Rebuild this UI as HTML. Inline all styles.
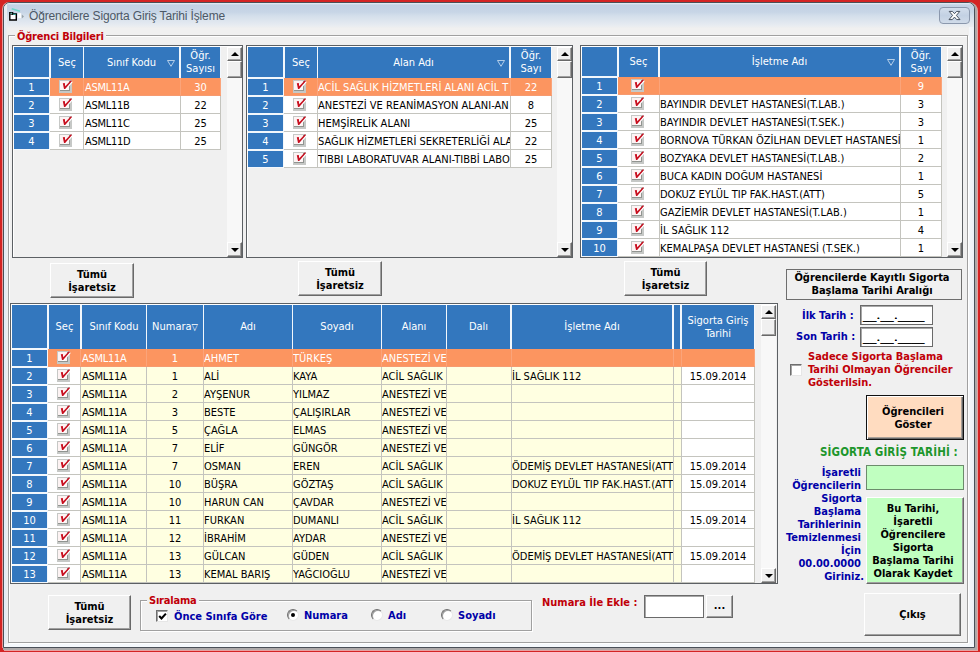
<!DOCTYPE html>
<html lang="tr"><head><meta charset="utf-8"><title>Öğrencilere Sigorta Giriş Tarihi İşleme</title>
<style>
html,body{margin:0;padding:0}
body{width:980px;height:652px;overflow:hidden;background:#d42424;position:relative;
 font-family:"DejaVu Sans Condensed","Liberation Sans",sans-serif;font-size:11px;line-height:13px;color:#000}
div,span,i,b,svg{position:absolute;box-sizing:border-box}
#win{left:3px;top:2px;width:972px;height:646px;border:1px solid #4a5058;border-radius:7px 7px 0 0;
 background:#f0f0f0;overflow:hidden;box-shadow:1px 1px 0 1px #aeaaaa,2px 2px 0 1px #e6a2a2,-1px 0 0 0 #e89a9a}
#tb{left:0;top:0;width:970px;height:25px;background:linear-gradient(#e9eff6 0,#c3d2e5 2px,#c7d5e6 9px,#d4dfeb 13px,#e0e7ef 19px,#e9edf1 23px,#efefef 25px)}
#ttl{left:25px;top:4px;font:12px/16px "Liberation Sans",sans-serif;color:#4c5866;letter-spacing:-0.15px;white-space:nowrap}
#cls{left:935px;top:4px;width:32px;height:18px;border:1px solid #8b98ad;border-radius:4px;background:linear-gradient(#d3deec,#c3d1e3 50%,#d0dbe9)}
#lf{left:0;top:0;width:3px;height:646px;background:linear-gradient(90deg,#e6f0fa,#e4eaf2 60%,#f0f0f0)}
.gb{border:1px solid #a0a0a0;box-shadow:1px 1px 0 #fff, inset 1px 1px 0 #fff}
.lg{background:#f0f0f0;letter-spacing:-0.2px;font-weight:bold;color:#c00008;white-space:nowrap;padding:0 2px}
.grid{border:1px solid #5c6064;background:#f0f0f0;box-shadow:inset 1px 1px 0 #fff;box-sizing:content-box}
.sepbg{background:#f2f7fc}
.hd{background:#3377be;color:#fff;text-align:center;overflow:hidden;display:flex;align-items:center;justify-content:center}
.hd span{position:static;display:block;white-space:pre-line;line-height:13px}
.srt{top:50%;margin-top:-3px}
.fx{background:#3377be;color:#fff;text-align:center;line-height:15px;padding-top:1px}
.dc{white-space:nowrap;overflow:hidden;line-height:13px;padding-top:3px;box-shadow:1px 0 0 #c4c4be,0 1px 0 #c4c4be,1px 1px 0 #c4c4be}
.dc.sl{color:#fff;box-shadow:1px 0 0 #fba47a,0 1px 0 #f69a70,1px 1px 0 #f69a70}
.l{text-align:left}
.k{text-align:left;padding-left:1px;letter-spacing:-0.3px}
.c{text-align:center}
.ck{left:9px;top:2px;width:13px;height:13px;background:#fdf3f3;border:solid #c6c8c6;border-width:1px 2px 2px 1px;box-shadow:inset -1px -1px 0 #909490}
.ck svg{left:-1px;top:-1px;overflow:visible}
.trk{background:#f8f8f8}
.sbtn{background:#f0f0f0;border:1px solid;border-color:#fff #696969 #696969 #fff;box-shadow:inset -1px -1px 0 #a0a0a0}
.aup{left:3px;top:4px;width:0;height:0;border:4px solid transparent;border-top:0;border-bottom:4px solid #000}
.adn{left:3px;top:5px;width:0;height:0;border:4px solid transparent;border-bottom:0;border-top:4px solid #000}
.btn{background:#f0f0f0;border:1px solid;border-color:#fff #696969 #696969 #fff;box-shadow:inset -1px -1px 0 #a0a0a0;font-weight:bold;text-align:center;display:flex;align-items:center;justify-content:center;color:#000}
.btn span{position:static;display:block;white-space:pre-line;line-height:13px}
.tx{white-space:nowrap;font-weight:bold}
.nv{color:#0000a8}
.rd{color:#c00008}
.inp{background:#fff;border:1px solid #6a6a6a;box-shadow:inset 1px 1px 0 #a8a8a8}
.cb{background:#fff;border:1px solid;border-color:#6e6e6e #e6e6e6 #e6e6e6 #6e6e6e;box-shadow:inset 1px 1px 0 #a4a4a4}
</style></head><body>
<div id="win">
<div id="tb"></div><div id="lf"></div>

<div style="left:-4px;top:-3px;width:980px;height:652px">
<svg style="left:9px;top:8px" width="16" height="14" viewBox="0 0 16 14"><path d="M0.8 4.6H3.6V6H7.3V12H0.8Z" fill="#fff" stroke="#000" stroke-width="1.4"/><path d="M1.4 6.3H6.8" stroke="#000" stroke-width="0.9"/><path d="M1.6 5.2H3.2M4.2 6.4H6.8" stroke="#38c8b4" stroke-width="0.9"/><path d="M2.7 0.8L11 3.2" stroke="#6fd6c8" stroke-width="1.5"/><rect x="8.8" y="5.2" width="3.4" height="4.9" fill="#fdfdfd"/><path d="M12.8 6.6L15 8.5L12.8 10.4Z" fill="#98a2a8"/></svg><div id="ttl" style="left:29px;top:8px">Öğrencilere Sigorta Giriş Tarihi İşleme</div><div id="cls" style="left:939px;top:7px;width:31px;height:17px"><svg style="left:8px;top:2px" width="13" height="11" viewBox="0 0 13 11"><path d="M1.2 1.4h3.2L6.5 3.7 8.6 1.4h3.2L8.4 5.4 12 9.6H8.7L6.5 7.1 4.3 9.6H1L4.6 5.4z" fill="#fff" stroke="#46505e" stroke-width="1" stroke-linejoin="round"/></svg></div><div class="" style="left:969px;top:27px;width:5px;height:620px;background:linear-gradient(90deg,#f6f8fb,#edf2f8)"></div><div class="" style="left:4px;top:644px;width:970px;height:3px;background:#f5f8fc"></div><div class="gb" style="left:8px;top:35px;width:960px;height:608px;"></div><div class="lg" style="left:15px;top:30px">Öğrenci Bilgileri</div><div class="grid" style="left:12px;top:45px;width:229px;height:211px"></div><div class="sepbg" style="left:14px;top:47px;width:207px;height:32px;"></div><div class="hd" style="left:14px;top:47px;width:35px;height:30px;"><span></span></div><div class="hd" style="left:51px;top:47px;width:32px;height:31px;padding-bottom:1px;"><span>Seç</span></div><div class="hd" style="left:84px;top:47px;width:95px;height:31px;padding-bottom:1px;"><span>Sınıf Kodu</span><svg class="srt" style="right:4px" width="8" height="7" viewBox="0 0 8 7"><path d="M0.5 0.5 H7.5 L4 6.3 Z" fill="none" stroke="#d4e3f3" stroke-width="0.8"/></svg></div><div class="hd" style="left:181px;top:47px;width:39px;height:31px;padding-bottom:1px;"><span>Öğr.
Sayısı</span></div><div class="sepbg" style="left:14px;top:78px;width:37px;height:72px;"></div><div class="fx" style="left:14px;top:79px;width:35px;height:16px;">1</div><div class="fx" style="left:14px;top:97px;width:35px;height:16px;">2</div><div class="fx" style="left:14px;top:115px;width:35px;height:16px;">3</div><div class="fx" style="left:14px;top:133px;width:35px;height:16px;">4</div><div class="dc sl cc" style="left:50px;top:78px;width:33px;height:17px;background:#fc9560;"><i class="ck" style="left:9px"><svg width="13" height="13" viewBox="0 0 13 13"><path d="M4.6 4.3 L6.6 3.9 L7.1 7.2 L12.7 1.2 L13.8 2.1 L7 10.1 L5.8 10.1 Z" fill="#fff"/><path d="M3.8 3.3 L5.8 2.9 L6.3 6.2 L11.9 0.2 L13 1.1 L6.2 9.1 L5 9.1 Z" fill="#c80f1f"/></svg></i></div><div class="dc sl k" style="left:84px;top:78px;width:96px;height:17px;background:#fc9560;">ASML11A</div><div class="dc sl c" style="left:181px;top:78px;width:39px;height:17px;background:#fc9560;">30</div><div class="dc cc" style="left:50px;top:96px;width:33px;height:17px;background:#ffffff;"><i class="ck" style="left:9px"><svg width="13" height="13" viewBox="0 0 13 13"><path d="M4.6 4.3 L6.6 3.9 L7.1 7.2 L12.7 1.2 L13.8 2.1 L7 10.1 L5.8 10.1 Z" fill="#fff"/><path d="M3.8 3.3 L5.8 2.9 L6.3 6.2 L11.9 0.2 L13 1.1 L6.2 9.1 L5 9.1 Z" fill="#c80f1f"/></svg></i></div><div class="dc k" style="left:84px;top:96px;width:96px;height:17px;background:#ffffff;">ASML11B</div><div class="dc c" style="left:181px;top:96px;width:39px;height:17px;background:#ffffff;">22</div><div class="dc cc" style="left:50px;top:114px;width:33px;height:17px;background:#ffffff;"><i class="ck" style="left:9px"><svg width="13" height="13" viewBox="0 0 13 13"><path d="M4.6 4.3 L6.6 3.9 L7.1 7.2 L12.7 1.2 L13.8 2.1 L7 10.1 L5.8 10.1 Z" fill="#fff"/><path d="M3.8 3.3 L5.8 2.9 L6.3 6.2 L11.9 0.2 L13 1.1 L6.2 9.1 L5 9.1 Z" fill="#c80f1f"/></svg></i></div><div class="dc k" style="left:84px;top:114px;width:96px;height:17px;background:#ffffff;">ASML11C</div><div class="dc c" style="left:181px;top:114px;width:39px;height:17px;background:#ffffff;">25</div><div class="dc cc" style="left:50px;top:132px;width:33px;height:17px;background:#ffffff;"><i class="ck" style="left:9px"><svg width="13" height="13" viewBox="0 0 13 13"><path d="M4.6 4.3 L6.6 3.9 L7.1 7.2 L12.7 1.2 L13.8 2.1 L7 10.1 L5.8 10.1 Z" fill="#fff"/><path d="M3.8 3.3 L5.8 2.9 L6.3 6.2 L11.9 0.2 L13 1.1 L6.2 9.1 L5 9.1 Z" fill="#c80f1f"/></svg></i></div><div class="dc k" style="left:84px;top:132px;width:96px;height:17px;background:#ffffff;">ASML11D</div><div class="dc c" style="left:181px;top:132px;width:39px;height:17px;background:#ffffff;">25</div><div class="trk" style="left:227px;top:47px;width:15px;height:210px;"></div><div class="sbtn" style="left:227px;top:47px;width:15px;height:14px;"><b class="aup"></b></div><div class="sbtn" style="left:227px;top:61px;width:15px;height:17px;"></div><div class="sbtn" style="left:227px;top:242px;width:15px;height:15px;"><b class="adn"></b></div><div class="grid" style="left:246px;top:45px;width:325px;height:211px"></div><div class="sepbg" style="left:248px;top:47px;width:304px;height:32px;"></div><div class="hd" style="left:248px;top:47px;width:35px;height:30px;"><span></span></div><div class="hd" style="left:285px;top:47px;width:32px;height:31px;padding-bottom:1px;"><span>Seç</span></div><div class="hd" style="left:318px;top:47px;width:191px;height:31px;padding-bottom:1px;"><span>Alan Adı</span><svg class="srt" style="right:4px" width="8" height="7" viewBox="0 0 8 7"><path d="M0.5 0.5 H7.5 L4 6.3 Z" fill="none" stroke="#d4e3f3" stroke-width="0.8"/></svg></div><div class="hd" style="left:511px;top:47px;width:40px;height:31px;padding-bottom:1px;"><span>Öğr.
Sayı</span></div><div class="sepbg" style="left:248px;top:78px;width:37px;height:90px;"></div><div class="fx" style="left:248px;top:79px;width:35px;height:16px;">1</div><div class="fx" style="left:248px;top:97px;width:35px;height:16px;">2</div><div class="fx" style="left:248px;top:115px;width:35px;height:16px;">3</div><div class="fx" style="left:248px;top:133px;width:35px;height:16px;">4</div><div class="fx" style="left:248px;top:151px;width:35px;height:16px;">5</div><div class="dc sl cc" style="left:284px;top:78px;width:33px;height:17px;background:#fc9560;"><i class="ck" style="left:9px"><svg width="13" height="13" viewBox="0 0 13 13"><path d="M4.6 4.3 L6.6 3.9 L7.1 7.2 L12.7 1.2 L13.8 2.1 L7 10.1 L5.8 10.1 Z" fill="#fff"/><path d="M3.8 3.3 L5.8 2.9 L6.3 6.2 L11.9 0.2 L13 1.1 L6.2 9.1 L5 9.1 Z" fill="#c80f1f"/></svg></i></div><div class="dc sl l" style="left:318px;top:78px;width:192px;height:17px;background:#fc9560;">ACİL SAĞLIK HİZMETLERİ ALANI ACİL T</div><div class="dc sl c" style="left:511px;top:78px;width:40px;height:17px;background:#fc9560;">22</div><div class="dc cc" style="left:284px;top:96px;width:33px;height:17px;background:#ffffff;"><i class="ck" style="left:9px"><svg width="13" height="13" viewBox="0 0 13 13"><path d="M4.6 4.3 L6.6 3.9 L7.1 7.2 L12.7 1.2 L13.8 2.1 L7 10.1 L5.8 10.1 Z" fill="#fff"/><path d="M3.8 3.3 L5.8 2.9 L6.3 6.2 L11.9 0.2 L13 1.1 L6.2 9.1 L5 9.1 Z" fill="#c80f1f"/></svg></i></div><div class="dc l" style="left:318px;top:96px;width:192px;height:17px;background:#ffffff;">ANESTEZİ VE REANİMASYON ALANI-AN</div><div class="dc c" style="left:511px;top:96px;width:40px;height:17px;background:#ffffff;">8</div><div class="dc cc" style="left:284px;top:114px;width:33px;height:17px;background:#ffffff;"><i class="ck" style="left:9px"><svg width="13" height="13" viewBox="0 0 13 13"><path d="M4.6 4.3 L6.6 3.9 L7.1 7.2 L12.7 1.2 L13.8 2.1 L7 10.1 L5.8 10.1 Z" fill="#fff"/><path d="M3.8 3.3 L5.8 2.9 L6.3 6.2 L11.9 0.2 L13 1.1 L6.2 9.1 L5 9.1 Z" fill="#c80f1f"/></svg></i></div><div class="dc l" style="left:318px;top:114px;width:192px;height:17px;background:#ffffff;">HEMŞİRELİK ALANI</div><div class="dc c" style="left:511px;top:114px;width:40px;height:17px;background:#ffffff;">25</div><div class="dc cc" style="left:284px;top:132px;width:33px;height:17px;background:#ffffff;"><i class="ck" style="left:9px"><svg width="13" height="13" viewBox="0 0 13 13"><path d="M4.6 4.3 L6.6 3.9 L7.1 7.2 L12.7 1.2 L13.8 2.1 L7 10.1 L5.8 10.1 Z" fill="#fff"/><path d="M3.8 3.3 L5.8 2.9 L6.3 6.2 L11.9 0.2 L13 1.1 L6.2 9.1 L5 9.1 Z" fill="#c80f1f"/></svg></i></div><div class="dc l" style="left:318px;top:132px;width:192px;height:17px;background:#ffffff;">SAĞLIK HİZMETLERİ SEKRETERLİĞİ ALA</div><div class="dc c" style="left:511px;top:132px;width:40px;height:17px;background:#ffffff;">22</div><div class="dc cc" style="left:284px;top:150px;width:33px;height:17px;background:#ffffff;"><i class="ck" style="left:9px"><svg width="13" height="13" viewBox="0 0 13 13"><path d="M4.6 4.3 L6.6 3.9 L7.1 7.2 L12.7 1.2 L13.8 2.1 L7 10.1 L5.8 10.1 Z" fill="#fff"/><path d="M3.8 3.3 L5.8 2.9 L6.3 6.2 L11.9 0.2 L13 1.1 L6.2 9.1 L5 9.1 Z" fill="#c80f1f"/></svg></i></div><div class="dc l" style="left:318px;top:150px;width:192px;height:17px;background:#ffffff;">TIBBI LABORATUVAR ALANI-TIBBİ LABO</div><div class="dc c" style="left:511px;top:150px;width:40px;height:17px;background:#ffffff;">25</div><div class="trk" style="left:557px;top:47px;width:15px;height:210px;"></div><div class="sbtn" style="left:557px;top:47px;width:15px;height:14px;"><b class="aup"></b></div><div class="sbtn" style="left:557px;top:61px;width:15px;height:17px;"></div><div class="sbtn" style="left:557px;top:242px;width:15px;height:15px;"><b class="adn"></b></div><div class="grid" style="left:580px;top:45px;width:381px;height:211px"></div><div class="sepbg" style="left:582px;top:47px;width:360px;height:31px;"></div><div class="hd" style="left:582px;top:47px;width:35px;height:29px;"><span></span></div><div class="hd" style="left:619px;top:47px;width:39px;height:30px;padding-bottom:1px;"><span>Seç</span></div><div class="hd" style="left:660px;top:47px;width:239px;height:30px;padding-bottom:1px;"><span>İşletme Adı</span><svg class="srt" style="right:4px" width="8" height="7" viewBox="0 0 8 7"><path d="M0.5 0.5 H7.5 L4 6.3 Z" fill="none" stroke="#d4e3f3" stroke-width="0.8"/></svg></div><div class="hd" style="left:901px;top:47px;width:40px;height:30px;padding-bottom:1px;"><span>Öğr.
Sayı</span></div><div class="sepbg" style="left:582px;top:77px;width:37px;height:180px;"></div><div class="fx" style="left:582px;top:78px;width:35px;height:16px;">1</div><div class="fx" style="left:582px;top:96px;width:35px;height:16px;">2</div><div class="fx" style="left:582px;top:114px;width:35px;height:16px;">3</div><div class="fx" style="left:582px;top:132px;width:35px;height:16px;">4</div><div class="fx" style="left:582px;top:150px;width:35px;height:16px;">5</div><div class="fx" style="left:582px;top:168px;width:35px;height:16px;">6</div><div class="fx" style="left:582px;top:186px;width:35px;height:16px;">7</div><div class="fx" style="left:582px;top:204px;width:35px;height:16px;">8</div><div class="fx" style="left:582px;top:222px;width:35px;height:16px;">9</div><div class="fx" style="left:582px;top:240px;width:35px;height:16px;">10</div><div class="dc sl cc" style="left:618px;top:77px;width:41px;height:17px;background:#fc9560;"><i class="ck" style="left:13px"><svg width="13" height="13" viewBox="0 0 13 13"><path d="M4.6 4.3 L6.6 3.9 L7.1 7.2 L12.7 1.2 L13.8 2.1 L7 10.1 L5.8 10.1 Z" fill="#fff"/><path d="M3.8 3.3 L5.8 2.9 L6.3 6.2 L11.9 0.2 L13 1.1 L6.2 9.1 L5 9.1 Z" fill="#c80f1f"/></svg></i></div><div class="dc sl l" style="left:660px;top:77px;width:240px;height:17px;background:#fc9560;"></div><div class="dc sl c" style="left:901px;top:77px;width:40px;height:17px;background:#fc9560;">9</div><div class="dc cc" style="left:618px;top:95px;width:41px;height:17px;background:#ffffff;"><i class="ck" style="left:13px"><svg width="13" height="13" viewBox="0 0 13 13"><path d="M4.6 4.3 L6.6 3.9 L7.1 7.2 L12.7 1.2 L13.8 2.1 L7 10.1 L5.8 10.1 Z" fill="#fff"/><path d="M3.8 3.3 L5.8 2.9 L6.3 6.2 L11.9 0.2 L13 1.1 L6.2 9.1 L5 9.1 Z" fill="#c80f1f"/></svg></i></div><div class="dc l" style="left:660px;top:95px;width:240px;height:17px;background:#ffffff;">BAYINDIR DEVLET HASTANESİ(T.LAB.)</div><div class="dc c" style="left:901px;top:95px;width:40px;height:17px;background:#ffffff;">3</div><div class="dc cc" style="left:618px;top:113px;width:41px;height:17px;background:#ffffff;"><i class="ck" style="left:13px"><svg width="13" height="13" viewBox="0 0 13 13"><path d="M4.6 4.3 L6.6 3.9 L7.1 7.2 L12.7 1.2 L13.8 2.1 L7 10.1 L5.8 10.1 Z" fill="#fff"/><path d="M3.8 3.3 L5.8 2.9 L6.3 6.2 L11.9 0.2 L13 1.1 L6.2 9.1 L5 9.1 Z" fill="#c80f1f"/></svg></i></div><div class="dc l" style="left:660px;top:113px;width:240px;height:17px;background:#ffffff;">BAYINDIR DEVLET HASTANESİ(T.SEK.)</div><div class="dc c" style="left:901px;top:113px;width:40px;height:17px;background:#ffffff;">3</div><div class="dc cc" style="left:618px;top:131px;width:41px;height:17px;background:#ffffff;"><i class="ck" style="left:13px"><svg width="13" height="13" viewBox="0 0 13 13"><path d="M4.6 4.3 L6.6 3.9 L7.1 7.2 L12.7 1.2 L13.8 2.1 L7 10.1 L5.8 10.1 Z" fill="#fff"/><path d="M3.8 3.3 L5.8 2.9 L6.3 6.2 L11.9 0.2 L13 1.1 L6.2 9.1 L5 9.1 Z" fill="#c80f1f"/></svg></i></div><div class="dc l" style="left:660px;top:131px;width:240px;height:17px;background:#ffffff;">BORNOVA TÜRKAN ÖZİLHAN DEVLET HASTANESİ(</div><div class="dc c" style="left:901px;top:131px;width:40px;height:17px;background:#ffffff;">1</div><div class="dc cc" style="left:618px;top:149px;width:41px;height:17px;background:#ffffff;"><i class="ck" style="left:13px"><svg width="13" height="13" viewBox="0 0 13 13"><path d="M4.6 4.3 L6.6 3.9 L7.1 7.2 L12.7 1.2 L13.8 2.1 L7 10.1 L5.8 10.1 Z" fill="#fff"/><path d="M3.8 3.3 L5.8 2.9 L6.3 6.2 L11.9 0.2 L13 1.1 L6.2 9.1 L5 9.1 Z" fill="#c80f1f"/></svg></i></div><div class="dc l" style="left:660px;top:149px;width:240px;height:17px;background:#ffffff;">BOZYAKA DEVLET HASTANESİ(T.LAB.)</div><div class="dc c" style="left:901px;top:149px;width:40px;height:17px;background:#ffffff;">2</div><div class="dc cc" style="left:618px;top:167px;width:41px;height:17px;background:#ffffff;"><i class="ck" style="left:13px"><svg width="13" height="13" viewBox="0 0 13 13"><path d="M4.6 4.3 L6.6 3.9 L7.1 7.2 L12.7 1.2 L13.8 2.1 L7 10.1 L5.8 10.1 Z" fill="#fff"/><path d="M3.8 3.3 L5.8 2.9 L6.3 6.2 L11.9 0.2 L13 1.1 L6.2 9.1 L5 9.1 Z" fill="#c80f1f"/></svg></i></div><div class="dc l" style="left:660px;top:167px;width:240px;height:17px;background:#ffffff;">BUCA KADIN DOĞUM HASTANESİ</div><div class="dc c" style="left:901px;top:167px;width:40px;height:17px;background:#ffffff;">1</div><div class="dc cc" style="left:618px;top:185px;width:41px;height:17px;background:#ffffff;"><i class="ck" style="left:13px"><svg width="13" height="13" viewBox="0 0 13 13"><path d="M4.6 4.3 L6.6 3.9 L7.1 7.2 L12.7 1.2 L13.8 2.1 L7 10.1 L5.8 10.1 Z" fill="#fff"/><path d="M3.8 3.3 L5.8 2.9 L6.3 6.2 L11.9 0.2 L13 1.1 L6.2 9.1 L5 9.1 Z" fill="#c80f1f"/></svg></i></div><div class="dc l" style="left:660px;top:185px;width:240px;height:17px;background:#ffffff;">DOKUZ EYLÜL TIP FAK.HAST.(ATT)</div><div class="dc c" style="left:901px;top:185px;width:40px;height:17px;background:#ffffff;">5</div><div class="dc cc" style="left:618px;top:203px;width:41px;height:17px;background:#ffffff;"><i class="ck" style="left:13px"><svg width="13" height="13" viewBox="0 0 13 13"><path d="M4.6 4.3 L6.6 3.9 L7.1 7.2 L12.7 1.2 L13.8 2.1 L7 10.1 L5.8 10.1 Z" fill="#fff"/><path d="M3.8 3.3 L5.8 2.9 L6.3 6.2 L11.9 0.2 L13 1.1 L6.2 9.1 L5 9.1 Z" fill="#c80f1f"/></svg></i></div><div class="dc l" style="left:660px;top:203px;width:240px;height:17px;background:#ffffff;">GAZİEMİR DEVLET HASTANESİ(T.LAB.)</div><div class="dc c" style="left:901px;top:203px;width:40px;height:17px;background:#ffffff;">1</div><div class="dc cc" style="left:618px;top:221px;width:41px;height:17px;background:#ffffff;"><i class="ck" style="left:13px"><svg width="13" height="13" viewBox="0 0 13 13"><path d="M4.6 4.3 L6.6 3.9 L7.1 7.2 L12.7 1.2 L13.8 2.1 L7 10.1 L5.8 10.1 Z" fill="#fff"/><path d="M3.8 3.3 L5.8 2.9 L6.3 6.2 L11.9 0.2 L13 1.1 L6.2 9.1 L5 9.1 Z" fill="#c80f1f"/></svg></i></div><div class="dc l" style="left:660px;top:221px;width:240px;height:17px;background:#ffffff;">İL SAĞLIK 112</div><div class="dc c" style="left:901px;top:221px;width:40px;height:17px;background:#ffffff;">4</div><div class="dc cc" style="left:618px;top:239px;width:41px;height:17px;background:#ffffff;"><i class="ck" style="left:13px"><svg width="13" height="13" viewBox="0 0 13 13"><path d="M4.6 4.3 L6.6 3.9 L7.1 7.2 L12.7 1.2 L13.8 2.1 L7 10.1 L5.8 10.1 Z" fill="#fff"/><path d="M3.8 3.3 L5.8 2.9 L6.3 6.2 L11.9 0.2 L13 1.1 L6.2 9.1 L5 9.1 Z" fill="#c80f1f"/></svg></i></div><div class="dc l" style="left:660px;top:239px;width:240px;height:17px;background:#ffffff;">KEMALPAŞA DEVLET HASTANESİ (T.SEK.)</div><div class="dc c" style="left:901px;top:239px;width:40px;height:17px;background:#ffffff;">1</div><div class="trk" style="left:947px;top:47px;width:15px;height:210px;"></div><div class="sbtn" style="left:947px;top:47px;width:15px;height:14px;"><b class="aup"></b></div><div class="sbtn" style="left:947px;top:61px;width:15px;height:17px;"></div><div class="sbtn" style="left:947px;top:242px;width:15px;height:15px;"><b class="adn"></b></div><div class="btn" style="left:50px;top:263px;width:84px;height:35px;"><span>Tümü
İşaretsiz</span></div><div class="btn" style="left:298px;top:261px;width:84px;height:35px;"><span>Tümü
İşaretsiz</span></div><div class="btn" style="left:624px;top:261px;width:83px;height:35px;"><span>Tümü
İşaretsiz</span></div><div class="btn" style="left:48px;top:595px;width:83px;height:35px;"><span>Tümü
İşaretsiz</span></div><div class="grid" style="left:10px;top:303px;width:766px;height:279px"></div><div class="sepbg" style="left:12px;top:305px;width:743px;height:45px;"></div><div class="hd" style="left:12px;top:305px;width:35px;height:43px;"><span></span></div><div class="hd" style="left:49px;top:305px;width:31px;height:44px;padding-bottom:1px;"><span>Seç</span></div><div class="hd" style="left:82px;top:305px;width:64px;height:44px;padding-bottom:1px;"><span>Sınıf Kodu</span></div><div class="hd" style="left:147px;top:305px;width:56px;height:44px;padding-bottom:1px;"><span>Numara<small>▽</small></span></div><div class="hd" style="left:204px;top:305px;width:88px;height:44px;padding-bottom:1px;"><span>Adı</span></div><div class="hd" style="left:293px;top:305px;width:88px;height:44px;padding-bottom:1px;"><span>Soyadı</span></div><div class="hd" style="left:382px;top:305px;width:64px;height:44px;padding-bottom:1px;"><span>Alanı</span></div><div class="hd" style="left:447px;top:305px;width:63px;height:44px;padding-bottom:1px;"><span>Dalı</span></div><div class="hd" style="left:512px;top:305px;width:160px;height:44px;padding-bottom:1px;"><span>İşletme Adı</span></div><div class="hd" style="left:674px;top:305px;width:6px;height:44px;padding-bottom:1px;"><span></span></div><div class="hd" style="left:682px;top:305px;width:72px;height:44px;padding-bottom:1px;"><span>Sigorta Giriş
Tarihi</span></div><div class="sepbg" style="left:12px;top:349px;width:37px;height:234px;"></div><div class="fx" style="left:12px;top:350px;width:35px;height:16px;">1</div><div class="fx" style="left:12px;top:368px;width:35px;height:16px;">2</div><div class="fx" style="left:12px;top:386px;width:35px;height:16px;">3</div><div class="fx" style="left:12px;top:404px;width:35px;height:16px;">4</div><div class="fx" style="left:12px;top:422px;width:35px;height:16px;">5</div><div class="fx" style="left:12px;top:440px;width:35px;height:16px;">6</div><div class="fx" style="left:12px;top:458px;width:35px;height:16px;">7</div><div class="fx" style="left:12px;top:476px;width:35px;height:16px;">8</div><div class="fx" style="left:12px;top:494px;width:35px;height:16px;">9</div><div class="fx" style="left:12px;top:512px;width:35px;height:16px;">10</div><div class="fx" style="left:12px;top:530px;width:35px;height:16px;">11</div><div class="fx" style="left:12px;top:548px;width:35px;height:16px;">12</div><div class="fx" style="left:12px;top:566px;width:35px;height:16px;">13</div><div class="dc sl cc" style="left:48px;top:349px;width:32px;height:17px;background:#fc9560;"><i class="ck" style="left:9px"><svg width="13" height="13" viewBox="0 0 13 13"><path d="M4.6 4.3 L6.6 3.9 L7.1 7.2 L12.7 1.2 L13.8 2.1 L7 10.1 L5.8 10.1 Z" fill="#fff"/><path d="M3.8 3.3 L5.8 2.9 L6.3 6.2 L11.9 0.2 L13 1.1 L6.2 9.1 L5 9.1 Z" fill="#c80f1f"/></svg></i></div><div class="dc sl k" style="left:81px;top:349px;width:65px;height:17px;background:#fc9560;">ASML11A</div><div class="dc sl c" style="left:147px;top:349px;width:56px;height:17px;background:#fc9560;">1</div><div class="dc sl l" style="left:204px;top:349px;width:88px;height:17px;background:#fc9560;">AHMET</div><div class="dc sl l" style="left:293px;top:349px;width:88px;height:17px;background:#fc9560;">TÜRKEŞ</div><div class="dc sl l" style="left:382px;top:349px;width:64px;height:17px;background:#fc9560;">ANESTEZİ VE</div><div class="dc sl l" style="left:447px;top:349px;width:64px;height:17px;background:#fc9560;"></div><div class="dc sl l" style="left:512px;top:349px;width:161px;height:17px;background:#fc9560;"></div><div class="dc sl l" style="left:674px;top:349px;width:7px;height:17px;background:#fc9560;"></div><div class="dc sl c" style="left:682px;top:349px;width:72px;height:17px;background:#fc9560;"></div><div class="dc cc" style="left:48px;top:367px;width:32px;height:17px;background:#ffffff;"><i class="ck" style="left:9px"><svg width="13" height="13" viewBox="0 0 13 13"><path d="M4.6 4.3 L6.6 3.9 L7.1 7.2 L12.7 1.2 L13.8 2.1 L7 10.1 L5.8 10.1 Z" fill="#fff"/><path d="M3.8 3.3 L5.8 2.9 L6.3 6.2 L11.9 0.2 L13 1.1 L6.2 9.1 L5 9.1 Z" fill="#c80f1f"/></svg></i></div><div class="dc k" style="left:81px;top:367px;width:65px;height:17px;background:#ffffe1;">ASML11A</div><div class="dc c" style="left:147px;top:367px;width:56px;height:17px;background:#ffffe1;">1</div><div class="dc l" style="left:204px;top:367px;width:88px;height:17px;background:#ffffe1;">ALİ</div><div class="dc l" style="left:293px;top:367px;width:88px;height:17px;background:#ffffe1;">KAYA</div><div class="dc l" style="left:382px;top:367px;width:64px;height:17px;background:#ffffe1;">ACİL SAĞLIK</div><div class="dc l" style="left:447px;top:367px;width:64px;height:17px;background:#ffffe1;"></div><div class="dc l" style="left:512px;top:367px;width:161px;height:17px;background:#ffffe1;">İL SAĞLIK 112</div><div class="dc l" style="left:674px;top:367px;width:7px;height:17px;background:#ffffe1;"></div><div class="dc c" style="left:682px;top:367px;width:72px;height:17px;background:#ffffff;">15.09.2014</div><div class="dc cc" style="left:48px;top:385px;width:32px;height:17px;background:#ffffff;"><i class="ck" style="left:9px"><svg width="13" height="13" viewBox="0 0 13 13"><path d="M4.6 4.3 L6.6 3.9 L7.1 7.2 L12.7 1.2 L13.8 2.1 L7 10.1 L5.8 10.1 Z" fill="#fff"/><path d="M3.8 3.3 L5.8 2.9 L6.3 6.2 L11.9 0.2 L13 1.1 L6.2 9.1 L5 9.1 Z" fill="#c80f1f"/></svg></i></div><div class="dc k" style="left:81px;top:385px;width:65px;height:17px;background:#ffffe1;">ASML11A</div><div class="dc c" style="left:147px;top:385px;width:56px;height:17px;background:#ffffe1;">2</div><div class="dc l" style="left:204px;top:385px;width:88px;height:17px;background:#ffffe1;">AYŞENUR</div><div class="dc l" style="left:293px;top:385px;width:88px;height:17px;background:#ffffe1;">YILMAZ</div><div class="dc l" style="left:382px;top:385px;width:64px;height:17px;background:#ffffe1;">ANESTEZİ VE</div><div class="dc l" style="left:447px;top:385px;width:64px;height:17px;background:#ffffe1;"></div><div class="dc l" style="left:512px;top:385px;width:161px;height:17px;background:#ffffe1;"></div><div class="dc l" style="left:674px;top:385px;width:7px;height:17px;background:#ffffe1;"></div><div class="dc c" style="left:682px;top:385px;width:72px;height:17px;background:#ffffff;"></div><div class="dc cc" style="left:48px;top:403px;width:32px;height:17px;background:#ffffff;"><i class="ck" style="left:9px"><svg width="13" height="13" viewBox="0 0 13 13"><path d="M4.6 4.3 L6.6 3.9 L7.1 7.2 L12.7 1.2 L13.8 2.1 L7 10.1 L5.8 10.1 Z" fill="#fff"/><path d="M3.8 3.3 L5.8 2.9 L6.3 6.2 L11.9 0.2 L13 1.1 L6.2 9.1 L5 9.1 Z" fill="#c80f1f"/></svg></i></div><div class="dc k" style="left:81px;top:403px;width:65px;height:17px;background:#ffffe1;">ASML11A</div><div class="dc c" style="left:147px;top:403px;width:56px;height:17px;background:#ffffe1;">3</div><div class="dc l" style="left:204px;top:403px;width:88px;height:17px;background:#ffffe1;">BESTE</div><div class="dc l" style="left:293px;top:403px;width:88px;height:17px;background:#ffffe1;">ÇALIŞIRLAR</div><div class="dc l" style="left:382px;top:403px;width:64px;height:17px;background:#ffffe1;">ANESTEZİ VE</div><div class="dc l" style="left:447px;top:403px;width:64px;height:17px;background:#ffffe1;"></div><div class="dc l" style="left:512px;top:403px;width:161px;height:17px;background:#ffffe1;"></div><div class="dc l" style="left:674px;top:403px;width:7px;height:17px;background:#ffffe1;"></div><div class="dc c" style="left:682px;top:403px;width:72px;height:17px;background:#ffffff;"></div><div class="dc cc" style="left:48px;top:421px;width:32px;height:17px;background:#ffffff;"><i class="ck" style="left:9px"><svg width="13" height="13" viewBox="0 0 13 13"><path d="M4.6 4.3 L6.6 3.9 L7.1 7.2 L12.7 1.2 L13.8 2.1 L7 10.1 L5.8 10.1 Z" fill="#fff"/><path d="M3.8 3.3 L5.8 2.9 L6.3 6.2 L11.9 0.2 L13 1.1 L6.2 9.1 L5 9.1 Z" fill="#c80f1f"/></svg></i></div><div class="dc k" style="left:81px;top:421px;width:65px;height:17px;background:#ffffe1;">ASML11A</div><div class="dc c" style="left:147px;top:421px;width:56px;height:17px;background:#ffffe1;">5</div><div class="dc l" style="left:204px;top:421px;width:88px;height:17px;background:#ffffe1;">ÇAĞLA</div><div class="dc l" style="left:293px;top:421px;width:88px;height:17px;background:#ffffe1;">ELMAS</div><div class="dc l" style="left:382px;top:421px;width:64px;height:17px;background:#ffffe1;">ANESTEZİ VE</div><div class="dc l" style="left:447px;top:421px;width:64px;height:17px;background:#ffffe1;"></div><div class="dc l" style="left:512px;top:421px;width:161px;height:17px;background:#ffffe1;"></div><div class="dc l" style="left:674px;top:421px;width:7px;height:17px;background:#ffffe1;"></div><div class="dc c" style="left:682px;top:421px;width:72px;height:17px;background:#ffffff;"></div><div class="dc cc" style="left:48px;top:439px;width:32px;height:17px;background:#ffffff;"><i class="ck" style="left:9px"><svg width="13" height="13" viewBox="0 0 13 13"><path d="M4.6 4.3 L6.6 3.9 L7.1 7.2 L12.7 1.2 L13.8 2.1 L7 10.1 L5.8 10.1 Z" fill="#fff"/><path d="M3.8 3.3 L5.8 2.9 L6.3 6.2 L11.9 0.2 L13 1.1 L6.2 9.1 L5 9.1 Z" fill="#c80f1f"/></svg></i></div><div class="dc k" style="left:81px;top:439px;width:65px;height:17px;background:#ffffe1;">ASML11A</div><div class="dc c" style="left:147px;top:439px;width:56px;height:17px;background:#ffffe1;">7</div><div class="dc l" style="left:204px;top:439px;width:88px;height:17px;background:#ffffe1;">ELİF</div><div class="dc l" style="left:293px;top:439px;width:88px;height:17px;background:#ffffe1;">GÜNGÖR</div><div class="dc l" style="left:382px;top:439px;width:64px;height:17px;background:#ffffe1;">ANESTEZİ VE</div><div class="dc l" style="left:447px;top:439px;width:64px;height:17px;background:#ffffe1;"></div><div class="dc l" style="left:512px;top:439px;width:161px;height:17px;background:#ffffe1;"></div><div class="dc l" style="left:674px;top:439px;width:7px;height:17px;background:#ffffe1;"></div><div class="dc c" style="left:682px;top:439px;width:72px;height:17px;background:#ffffff;"></div><div class="dc cc" style="left:48px;top:457px;width:32px;height:17px;background:#ffffff;"><i class="ck" style="left:9px"><svg width="13" height="13" viewBox="0 0 13 13"><path d="M4.6 4.3 L6.6 3.9 L7.1 7.2 L12.7 1.2 L13.8 2.1 L7 10.1 L5.8 10.1 Z" fill="#fff"/><path d="M3.8 3.3 L5.8 2.9 L6.3 6.2 L11.9 0.2 L13 1.1 L6.2 9.1 L5 9.1 Z" fill="#c80f1f"/></svg></i></div><div class="dc k" style="left:81px;top:457px;width:65px;height:17px;background:#ffffe1;">ASML11A</div><div class="dc c" style="left:147px;top:457px;width:56px;height:17px;background:#ffffe1;">7</div><div class="dc l" style="left:204px;top:457px;width:88px;height:17px;background:#ffffe1;">OSMAN</div><div class="dc l" style="left:293px;top:457px;width:88px;height:17px;background:#ffffe1;">EREN</div><div class="dc l" style="left:382px;top:457px;width:64px;height:17px;background:#ffffe1;">ACİL SAĞLIK</div><div class="dc l" style="left:447px;top:457px;width:64px;height:17px;background:#ffffe1;"></div><div class="dc l" style="left:512px;top:457px;width:161px;height:17px;background:#ffffe1;">ÖDEMİŞ DEVLET HASTANESİ(ATT)</div><div class="dc l" style="left:674px;top:457px;width:7px;height:17px;background:#ffffe1;"></div><div class="dc c" style="left:682px;top:457px;width:72px;height:17px;background:#ffffff;">15.09.2014</div><div class="dc cc" style="left:48px;top:475px;width:32px;height:17px;background:#ffffff;"><i class="ck" style="left:9px"><svg width="13" height="13" viewBox="0 0 13 13"><path d="M4.6 4.3 L6.6 3.9 L7.1 7.2 L12.7 1.2 L13.8 2.1 L7 10.1 L5.8 10.1 Z" fill="#fff"/><path d="M3.8 3.3 L5.8 2.9 L6.3 6.2 L11.9 0.2 L13 1.1 L6.2 9.1 L5 9.1 Z" fill="#c80f1f"/></svg></i></div><div class="dc k" style="left:81px;top:475px;width:65px;height:17px;background:#ffffe1;">ASML11A</div><div class="dc c" style="left:147px;top:475px;width:56px;height:17px;background:#ffffe1;">10</div><div class="dc l" style="left:204px;top:475px;width:88px;height:17px;background:#ffffe1;">BÜŞRA</div><div class="dc l" style="left:293px;top:475px;width:88px;height:17px;background:#ffffe1;">GÖZTAŞ</div><div class="dc l" style="left:382px;top:475px;width:64px;height:17px;background:#ffffe1;">ACİL SAĞLIK</div><div class="dc l" style="left:447px;top:475px;width:64px;height:17px;background:#ffffe1;"></div><div class="dc l" style="left:512px;top:475px;width:161px;height:17px;background:#ffffe1;">DOKUZ EYLÜL TIP FAK.HAST.(ATT)</div><div class="dc l" style="left:674px;top:475px;width:7px;height:17px;background:#ffffe1;"></div><div class="dc c" style="left:682px;top:475px;width:72px;height:17px;background:#ffffff;">15.09.2014</div><div class="dc cc" style="left:48px;top:493px;width:32px;height:17px;background:#ffffff;"><i class="ck" style="left:9px"><svg width="13" height="13" viewBox="0 0 13 13"><path d="M4.6 4.3 L6.6 3.9 L7.1 7.2 L12.7 1.2 L13.8 2.1 L7 10.1 L5.8 10.1 Z" fill="#fff"/><path d="M3.8 3.3 L5.8 2.9 L6.3 6.2 L11.9 0.2 L13 1.1 L6.2 9.1 L5 9.1 Z" fill="#c80f1f"/></svg></i></div><div class="dc k" style="left:81px;top:493px;width:65px;height:17px;background:#ffffe1;">ASML11A</div><div class="dc c" style="left:147px;top:493px;width:56px;height:17px;background:#ffffe1;">10</div><div class="dc l" style="left:204px;top:493px;width:88px;height:17px;background:#ffffe1;">HARUN CAN</div><div class="dc l" style="left:293px;top:493px;width:88px;height:17px;background:#ffffe1;">ÇAVDAR</div><div class="dc l" style="left:382px;top:493px;width:64px;height:17px;background:#ffffe1;">ANESTEZİ VE</div><div class="dc l" style="left:447px;top:493px;width:64px;height:17px;background:#ffffe1;"></div><div class="dc l" style="left:512px;top:493px;width:161px;height:17px;background:#ffffe1;"></div><div class="dc l" style="left:674px;top:493px;width:7px;height:17px;background:#ffffe1;"></div><div class="dc c" style="left:682px;top:493px;width:72px;height:17px;background:#ffffff;"></div><div class="dc cc" style="left:48px;top:511px;width:32px;height:17px;background:#ffffff;"><i class="ck" style="left:9px"><svg width="13" height="13" viewBox="0 0 13 13"><path d="M4.6 4.3 L6.6 3.9 L7.1 7.2 L12.7 1.2 L13.8 2.1 L7 10.1 L5.8 10.1 Z" fill="#fff"/><path d="M3.8 3.3 L5.8 2.9 L6.3 6.2 L11.9 0.2 L13 1.1 L6.2 9.1 L5 9.1 Z" fill="#c80f1f"/></svg></i></div><div class="dc k" style="left:81px;top:511px;width:65px;height:17px;background:#ffffe1;">ASML11A</div><div class="dc c" style="left:147px;top:511px;width:56px;height:17px;background:#ffffe1;">11</div><div class="dc l" style="left:204px;top:511px;width:88px;height:17px;background:#ffffe1;">FURKAN</div><div class="dc l" style="left:293px;top:511px;width:88px;height:17px;background:#ffffe1;">DUMANLI</div><div class="dc l" style="left:382px;top:511px;width:64px;height:17px;background:#ffffe1;">ACİL SAĞLIK</div><div class="dc l" style="left:447px;top:511px;width:64px;height:17px;background:#ffffe1;"></div><div class="dc l" style="left:512px;top:511px;width:161px;height:17px;background:#ffffe1;">İL SAĞLIK 112</div><div class="dc l" style="left:674px;top:511px;width:7px;height:17px;background:#ffffe1;"></div><div class="dc c" style="left:682px;top:511px;width:72px;height:17px;background:#ffffff;">15.09.2014</div><div class="dc cc" style="left:48px;top:529px;width:32px;height:17px;background:#ffffff;"><i class="ck" style="left:9px"><svg width="13" height="13" viewBox="0 0 13 13"><path d="M4.6 4.3 L6.6 3.9 L7.1 7.2 L12.7 1.2 L13.8 2.1 L7 10.1 L5.8 10.1 Z" fill="#fff"/><path d="M3.8 3.3 L5.8 2.9 L6.3 6.2 L11.9 0.2 L13 1.1 L6.2 9.1 L5 9.1 Z" fill="#c80f1f"/></svg></i></div><div class="dc k" style="left:81px;top:529px;width:65px;height:17px;background:#ffffe1;">ASML11A</div><div class="dc c" style="left:147px;top:529px;width:56px;height:17px;background:#ffffe1;">12</div><div class="dc l" style="left:204px;top:529px;width:88px;height:17px;background:#ffffe1;">İBRAHİM</div><div class="dc l" style="left:293px;top:529px;width:88px;height:17px;background:#ffffe1;">AYDAR</div><div class="dc l" style="left:382px;top:529px;width:64px;height:17px;background:#ffffe1;">ANESTEZİ VE</div><div class="dc l" style="left:447px;top:529px;width:64px;height:17px;background:#ffffe1;"></div><div class="dc l" style="left:512px;top:529px;width:161px;height:17px;background:#ffffe1;"></div><div class="dc l" style="left:674px;top:529px;width:7px;height:17px;background:#ffffe1;"></div><div class="dc c" style="left:682px;top:529px;width:72px;height:17px;background:#ffffff;"></div><div class="dc cc" style="left:48px;top:547px;width:32px;height:17px;background:#ffffff;"><i class="ck" style="left:9px"><svg width="13" height="13" viewBox="0 0 13 13"><path d="M4.6 4.3 L6.6 3.9 L7.1 7.2 L12.7 1.2 L13.8 2.1 L7 10.1 L5.8 10.1 Z" fill="#fff"/><path d="M3.8 3.3 L5.8 2.9 L6.3 6.2 L11.9 0.2 L13 1.1 L6.2 9.1 L5 9.1 Z" fill="#c80f1f"/></svg></i></div><div class="dc k" style="left:81px;top:547px;width:65px;height:17px;background:#ffffe1;">ASML11A</div><div class="dc c" style="left:147px;top:547px;width:56px;height:17px;background:#ffffe1;">13</div><div class="dc l" style="left:204px;top:547px;width:88px;height:17px;background:#ffffe1;">GÜLCAN</div><div class="dc l" style="left:293px;top:547px;width:88px;height:17px;background:#ffffe1;">GÜDEN</div><div class="dc l" style="left:382px;top:547px;width:64px;height:17px;background:#ffffe1;">ACİL SAĞLIK</div><div class="dc l" style="left:447px;top:547px;width:64px;height:17px;background:#ffffe1;"></div><div class="dc l" style="left:512px;top:547px;width:161px;height:17px;background:#ffffe1;">ÖDEMİŞ DEVLET HASTANESİ(ATT)</div><div class="dc l" style="left:674px;top:547px;width:7px;height:17px;background:#ffffe1;"></div><div class="dc c" style="left:682px;top:547px;width:72px;height:17px;background:#ffffff;">15.09.2014</div><div class="dc cc" style="left:48px;top:565px;width:32px;height:17px;background:#ffffff;"><i class="ck" style="left:9px"><svg width="13" height="13" viewBox="0 0 13 13"><path d="M4.6 4.3 L6.6 3.9 L7.1 7.2 L12.7 1.2 L13.8 2.1 L7 10.1 L5.8 10.1 Z" fill="#fff"/><path d="M3.8 3.3 L5.8 2.9 L6.3 6.2 L11.9 0.2 L13 1.1 L6.2 9.1 L5 9.1 Z" fill="#c80f1f"/></svg></i></div><div class="dc k" style="left:81px;top:565px;width:65px;height:17px;background:#ffffe1;">ASML11A</div><div class="dc c" style="left:147px;top:565px;width:56px;height:17px;background:#ffffe1;">13</div><div class="dc l" style="left:204px;top:565px;width:88px;height:17px;background:#ffffe1;">KEMAL BARIŞ</div><div class="dc l" style="left:293px;top:565px;width:88px;height:17px;background:#ffffe1;">YAĞCIOĞLU</div><div class="dc l" style="left:382px;top:565px;width:64px;height:17px;background:#ffffe1;">ANESTEZİ VE</div><div class="dc l" style="left:447px;top:565px;width:64px;height:17px;background:#ffffe1;"></div><div class="dc l" style="left:512px;top:565px;width:161px;height:17px;background:#ffffe1;"></div><div class="dc l" style="left:674px;top:565px;width:7px;height:17px;background:#ffffe1;"></div><div class="dc c" style="left:682px;top:565px;width:72px;height:17px;background:#ffffff;"></div><div class="trk" style="left:761px;top:305px;width:15px;height:278px;"></div><div class="sbtn" style="left:761px;top:305px;width:15px;height:14px;"><b class="aup"></b></div><div class="sbtn" style="left:761px;top:319px;width:15px;height:17px;"></div><div class="sbtn" style="left:761px;top:568px;width:15px;height:15px;"><b class="adn"></b></div><div class="" style="left:786px;top:269px;width:176px;height:31px;border:1px solid #6e6e6e;text-align:center;font-weight:bold;line-height:13px;padding-top:1px;padding-right:4px;white-space:pre-line">Öğrencilerde Kayıtlı Sigorta
Başlama Tarihi Aralığı</div><div class="tx nv" style="left:802px;top:309px">İlk Tarih :</div><div class="tx nv" style="left:796px;top:330px">Son Tarih :</div><div class="inp" style="left:860px;top:305px;width:73px;height:20px;"><span style="left:2px;top:3px;line-height:13px;white-space:pre;transform:scaleX(1.34);transform-origin:0 0;text-shadow:0 0.4px 0 #000">__.__.____</span></div><div class="inp" style="left:860px;top:327px;width:73px;height:20px;"><span style="left:2px;top:3px;line-height:13px;white-space:pre;transform:scaleX(1.34);transform-origin:0 0;text-shadow:0 0.4px 0 #000">__.__.____</span></div><div class="cb" style="left:790px;top:364px;width:12px;height:12px;"></div><div class="tx rd" style="left:808px;top:350px;line-height:13px;white-space:pre-line">Sadece Sigorta Başlama
Tarihi Olmayan Öğrenciler
Gösterilsin.</div><div class="btn" style="left:866px;top:395px;width:98px;height:45px;background:#ffdcc0;border:1px solid #111;box-shadow:inset 1px 1px 0 #fff,inset -1px -1px 0 #696969,inset -2px -2px 0 #a8a098;padding-right:4px"><span>Öğrencileri
Göster</span></div><div class="tx" style="left:820px;top:446px;color:#1d962c;font-size:11.5px;letter-spacing:0.12px">SİGORTA GİRİŞ TARİHİ :</div><div class="inp" style="left:866px;top:465px;width:98px;height:25px;background:#c0ffc0;border-color:#6c8c6c;box-shadow:none"></div><div class="btn" style="left:866px;top:497px;width:98px;height:87px;background:#c0ffc0;padding-right:4px"><span>Bu Tarihi,
İşaretli
Öğrencilere
Sigorta
Başlama Tarihi
Olarak Kaydet</span></div><div class="tx nv" style="left:761px;width:100px;top:466px;text-align:right;line-height:13px;white-space:pre-line">İşaretli
Öğrencilerin
<span style="position:relative;left:1px">Sigorta</span>
Başlama
Tarihlerinin
Temizlenmesi
İçin
00.00.0000
<span style="position:relative;left:3px">Giriniz.</span></div><div class="gb" style="left:140px;top:600px;width:392px;height:31px;"></div><div class="lg" style="left:147px;top:594px">Sıralama</div><div class="cb" style="left:156px;top:610px;width:12px;height:12px;"><svg style="left:1px;top:1px" width="9" height="9" viewBox="0 0 9 9"><path d="M1.2 4 L3.5 6.4 L7.9 1.6" fill="none" stroke="#000" stroke-width="2.1"/></svg></div><div class="tx nv" style="left:174px;top:610px">Önce Sınıfa Göre</div><div class="" style="left:287px;top:609px;width:12px;height:12px;border-radius:6px;background:#fff;border:1px solid;border-color:#6e6e6e #e8e8e8 #e8e8e8 #6e6e6e;box-shadow:inset 1px 1px 0 #a0a0a0"><b style="left:3px;top:3px;width:4px;height:4px;border-radius:2px;background:#000"></b></div><div class="" style="left:371px;top:609px;width:12px;height:12px;border-radius:6px;background:#fff;border:1px solid;border-color:#6e6e6e #e8e8e8 #e8e8e8 #6e6e6e;box-shadow:inset 1px 1px 0 #a0a0a0"></div><div class="" style="left:441px;top:609px;width:12px;height:12px;border-radius:6px;background:#fff;border:1px solid;border-color:#6e6e6e #e8e8e8 #e8e8e8 #6e6e6e;box-shadow:inset 1px 1px 0 #a0a0a0"></div><div class="tx nv" style="left:304px;top:609px">Numara</div><div class="tx nv" style="left:388px;top:609px">Adı</div><div class="tx nv" style="left:458px;top:609px">Soyadı</div><div class="tx rd" style="left:542px;top:596px">Numara İle Ekle :</div><div class="inp" style="left:644px;top:595px;width:60px;height:23px;"></div><div class="btn" style="left:706px;top:595px;width:27px;height:23px;"><span style="margin-top:-2px">...</span></div><div class="btn" style="left:864px;top:593px;width:97px;height:43px;"><span>Çıkış</span></div>
</div></div></body></html>
